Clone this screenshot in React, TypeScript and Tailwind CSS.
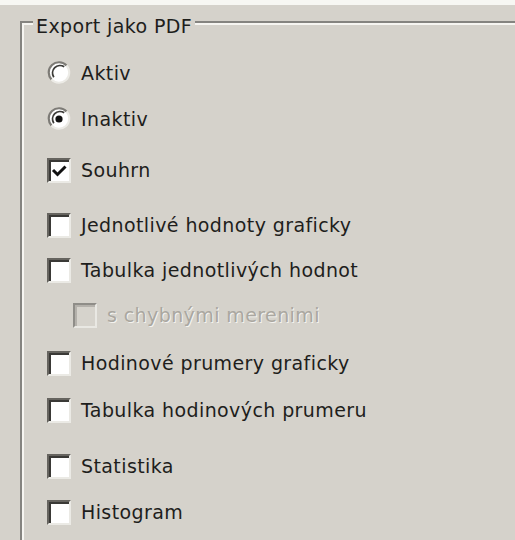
import React from "react";

const font = { fontFamily: '"DejaVu Sans", Tahoma, sans-serif' };

function Radio({ checked }: { checked?: boolean }) {
  return (
    <svg width="24" height="24" viewBox="0 0 24 24" className="shrink-0">
      <circle cx="12" cy="12" r="10" fill="#ffffff" />
      <path d="M4.5 18.5 A10 10 0 0 1 19.5 4.5" fill="none" stroke="#7d7b76" strokeWidth="2.2" />
      <path d="M6.8 16.2 A7.5 7.5 0 0 1 17.2 5.8" fill="none" stroke="#3c3b38" strokeWidth="1.8" />
      <path d="M19.5 4.5 A10 10 0 0 1 4.5 18.5" fill="none" stroke="#ecebe6" strokeWidth="2" />
      {checked && <circle cx="12" cy="12" r="3.6" fill="#111" />}
    </svg>
  );
}

function Check({ checked, disabled }: { checked?: boolean; disabled?: boolean }) {
  return (
    <div
      className={
        "relative h-[25px] w-[24px] shrink-0 border-t-2 border-l-2 border-b-2 border-r-2 " +
        (disabled
          ? "border-t-[#8f8d88] border-l-[#8f8d88] border-b-[#e9e8e3] border-r-[#e9e8e3] bg-[#d6d3cc]"
          : "border-t-[#66645f] border-l-[#66645f] border-b-[#ebeae5] border-r-[#ebeae5] bg-white")
      }
    >
      <div
        className={
          "absolute inset-0 border-t-2 border-l-2 " +
          (disabled ? "border-[#b4b1ab]" : "border-[#3a3936]")
        }
      />
      {checked && (
        <svg className="absolute left-[2px] top-[4px]" width="17" height="15" viewBox="0 0 17 15">
          <path d="M2 6 L6.5 10.5 L14.5 2.5" fill="none" stroke="#111" strokeWidth="3" />
        </svg>
      )}
    </div>
  );
}

function Row({
  mt,
  children,
  label,
  disabled,
  indent,
}: {
  mt: string;
  children: React.ReactNode;
  label: string;
  disabled?: boolean;
  indent?: boolean;
}) {
  return (
    <div className={"flex h-[26px] items-center " + mt + (indent ? " pl-[26px]" : "")}>
      {children}
      <span
        className={
          "ml-[10px] whitespace-nowrap text-[19px] leading-none tracking-[0.4px] " +
          (disabled ? "text-[#aaa7a0] [text-shadow:1px_1px_0_#f4f3ef]" : "text-[#1e1e1c]")
        }
      >
        {label}
      </span>
    </div>
  );
}

export default function App() {
  return (
    <div className="h-[540px] w-[515px] overflow-hidden bg-[#f7f7f3]" style={font}>
      <div className="mt-[5px] h-[535px] bg-[#d5d2cb] pl-[20px] pt-[16px]">
        <div className="relative h-[540px] border-t-2 border-l-2 border-[#858480]">
          <div className="h-full border-t-2 border-l-2 border-[#f6f5f1] pl-[23px]">
            <div className="absolute left-[11px] top-[-8px] bg-[#d5d2cb] px-[3px] text-[19px] leading-[22px] tracking-[0.4px] text-[#1e1e1c]">
              Export jako PDF
            </div>
            <div className="flex flex-col pt-[35px]">
              <Row mt="mt-0" label="Aktiv">
                <Radio />
              </Row>
              <Row mt="mt-[20px]" label="Inaktiv">
                <Radio checked />
              </Row>
              <Row mt="mt-[25px]" label="Souhrn">
                <Check checked />
              </Row>
              <Row mt="mt-[29px]" label="Jednotlivé hodnoty graficky">
                <Check />
              </Row>
              <Row mt="mt-[19px]" label="Tabulka jednotlivých hodnot">
                <Check />
              </Row>
              <Row mt="mt-[19px]" label="s chybnými merenimi" disabled indent>
                <Check disabled />
              </Row>
              <Row mt="mt-[22px]" label="Hodinové prumery graficky">
                <Check />
              </Row>
              <Row mt="mt-[21px]" label="Tabulka hodinových prumeru">
                <Check />
              </Row>
              <Row mt="mt-[30px]" label="Statistika">
                <Check />
              </Row>
              <Row mt="mt-[20px]" label="Histogram">
                <Check />
              </Row>
            </div>
          </div>
        </div>
      </div>
    </div>
  );
}
